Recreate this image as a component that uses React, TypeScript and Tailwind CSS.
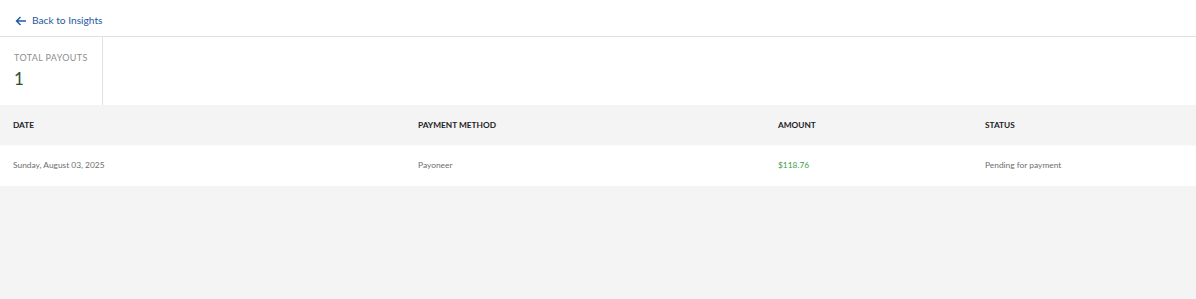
import React from 'react';

const font = { fontFamily: 'Lato, "Open Sans", Arial, sans-serif' };

const payouts = [
    { date: 'Sunday, August 03, 2025', method: 'Payoneer', amount: '$118.76', status: 'Pending for payment' },
];

export default function App() {
    return (
        <div className="min-h-[299px] w-full bg-[#f4f4f4] flex flex-col" style={font}>
            {/* Top bar */}
            <div className="bg-white h-[37px] flex items-center pt-[6px] px-[15px] border-b border-[#e1e1e1]">
                <a href="#" className="flex items-center gap-[5px] text-[10.2px] text-[#1d5aa0]">
                    <svg width="12" height="10" viewBox="0 0 12 10" fill="none" stroke="currentColor" strokeWidth="1.4">
                        <path d="M11 5H1.5M5.5 1 1.5 5l4 4" />
                    </svg>
                    Back to Insights
                </a>
            </div>

            {/* Stats */}
            <div className="bg-white flex h-[68px]">
                <div className="w-[103px] border-r border-[#e1e1e1] pl-[14px] pt-[14px]">
                    <div className="text-[9px] tracking-[0.04em] text-[#8e8e8e] uppercase">Total Payouts</div>
                    <div className="text-[17px] leading-none mt-[5px] text-[#2f4f2f]">1</div>
                </div>
            </div>

            {/* Table */}
            <div className="grid grid-cols-[405px_360px_207px_1fr]">
                <div className="contents font-bold text-[8.3px] text-[#222] uppercase">
                    <div className="h-[40px] flex items-center pt-[1px] pl-[13px]">Date</div>
                    <div className="h-[40px] flex items-center pt-[1px] pl-[13px]">Payment Method</div>
                    <div className="h-[40px] flex items-center pt-[1px] pl-[13px]">Amount</div>
                    <div className="h-[40px] flex items-center pt-[1px] pl-[13px]">Status</div>
                </div>
                {payouts.map((p) => (
                    <div key={p.date} className="contents text-[8.4px] text-[#6e6e6e]">
                        <div className="h-[41px] bg-white border-t border-[#fafafa] flex items-center pb-[2px] pl-[13px]">{p.date}</div>
                        <div className="h-[41px] bg-white border-t border-[#fafafa] flex items-center pb-[2px] pl-[13px]">{p.method}</div>
                        <div className="h-[41px] bg-white border-t border-[#fafafa] flex items-center pb-[2px] pl-[13px] text-[#3c9e48]">{p.amount}</div>
                        <div className="h-[41px] bg-white border-t border-[#fafafa] flex items-center pb-[2px] pl-[13px]">{p.status}</div>
                    </div>
                ))}
            </div>
        </div>
    );
}
